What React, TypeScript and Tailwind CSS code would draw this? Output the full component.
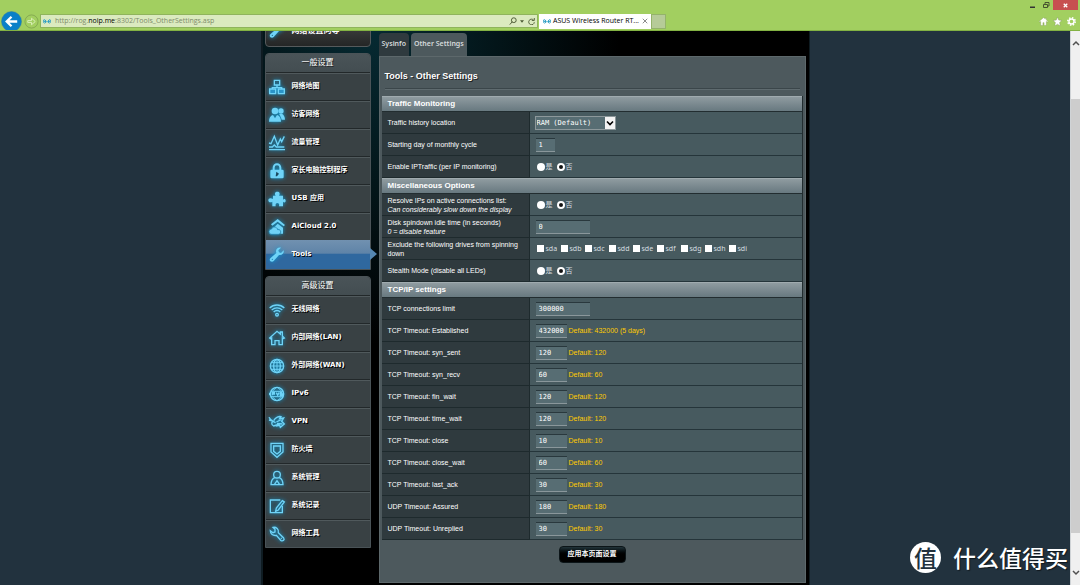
import type { ReactNode } from "react";

const icons: Record<string, ReactNode> = {
  map: (
    <g fill="none" stroke="currentColor" strokeWidth={2}>
      <path d="M8 2h8v7H8zM12 9v4M5 15v-2h14v2" />
      <path d="M1 15h9v7H1zM14 15h9v7h-9z" fill="#2a94c8" />
    </g>
  ),
  guest: (
    <g fill="currentColor">
      <circle cx="9" cy="6" r="5" />
      <circle cx="18" cy="6" r="4" />
      <path d="M0 22c0-5 2-9 6-10l3 5 3-5c4 1 6 5 6 10z" />
      <path d="M15 11l4-1c3 1 5 5 5 9h-5c-1-3-2-6-4-8z" />
    </g>
  ),
  traffic: (
    <g fill="none" stroke="currentColor" strokeWidth={2}>
      <path d="M0 12l3 1 5-11 5 13 4-9 2 4 4-8" />
      <path d="M0 18h5l3-3 3 3h12M0 22h24" />
    </g>
  ),
  lock: (
    <g>
      <path d="M7 11V7a5 5 0 0110 0v4" fill="none" stroke="currentColor" strokeWidth={3} />
      <rect x="2" y="10" width="20" height="13" rx="2" fill="currentColor" />
      <path d="M11 13l4 3-3 4h-2z" fill="#1b4a60" />
    </g>
  ),
  usb: (
    <path
      fill="currentColor"
      d="M6 7h4c-2-3-1-6 2.500-6s4.500 3 2.500 6h6v6c2-2 4-1 4 1.500s-2 3.500-4 1.500v7h-6c1-4-.5-5-2.500-5s-3 1-2.500 5H5v-7c-3 2-6 1-6-2s3-4 7-2z"
    />
  ),
  cloud: (
    <g fill="currentColor">
      <path d="M13 0l11 9-2 2-9-7-8 6-2-2z" />
      <path d="M13 7l8 6v9h-4c1-5-2-8-7-7l-3-2z" />
      <path d="M4 23a4 4 0 010-8c1-4 8-4 9 1 6-1 6 7 1 7z" stroke="#217ba6" />
    </g>
  ),
  wrench: (
    <path
      fill="currentColor"
      d="M22 5l-4 4-3-1-1-3 4-4c-5-1-9 3-7 8l-9 8c-3 3 2 7 5 4l8-9c5 1 8-3 7-7zM5 19.500a1 1 0 110-2 1 1 0 010 2z"
    />
  ),
  wifi: (
    <g fill="none" stroke="currentColor" strokeWidth={2}>
      <path d="M1 9c6-6 16-6 22 0M4 12c5-4 11-4 16 0M7 15c3-3 7-3 10 0" />
      <circle cx="12" cy="19" r="2" />
    </g>
  ),
  home: (
    <path
      fill="none"
      stroke="currentColor"
      strokeWidth={2}
      d="M1 12L12 2l5 4V3h3v6l3 3-2 1-1-1v10h-5v-6H9v6H4V12l-2 1z"
    />
  ),
  globe: (
    <g fill="none" stroke="currentColor" strokeWidth={2}>
      <circle cx="12" cy="12" r="10" />
      <ellipse cx="12" cy="12" rx="5" ry="10" />
      <path d="M12 2v20M2 12h20M4 7h16M4 17h16" strokeWidth={1.500} />
    </g>
  ),
  ipv6: (
    <g fill="none" stroke="currentColor" strokeWidth={2}>
      <circle cx="12" cy="12" r="10" />
      <path d="M12 2c-5 3-6 5-6 6M12 2c5 3 6 5 6 6M12 22c-5-3-6-5-6-6M12 22c5-3 6-5 6-6M3 8h18M3 16h18" strokeWidth={1.500} />
      <path d="M1 10v4M5 14v-4h3v2H5M11 10l2 4 2-4M20 10h-3v4h4v-2h-3" />
    </g>
  ),
  vpn: (
    <g fill="none" stroke="currentColor" strokeWidth={2}>
      <path d="M0 5c2 5 6 6 10 8M0 9l8 2c-5 0-5 5-1 7l9-3" />
      <path d="M7 10c3-5 8-7 11-6l-2 3 6-1-3 5 4 4-6 5-1-3-6 1M11 12l8-4M12 14l8 1" />
    </g>
  ),
  shield: (
    <g fill="none" stroke="currentColor" strokeWidth={2}>
      <path d="M3 2h18v13l-9 8-9-8z" />
      <path d="M7 6h10v8l-5 4-5-4z" />
    </g>
  ),
  admin: (
    <g fill="none" stroke="currentColor" strokeWidth={2}>
      <circle cx="12" cy="7" r="5" />
      <path d="M9 11c-4 2-6 5-6 11h18c0-6-2-9-6-11M8 22l4-6 4 6" />
    </g>
  ),
  log: (
    <g fill="none" stroke="currentColor" strokeWidth={2}>
      <path d="M17 3H2v19h18V12" />
      <path d="M20 4l3 2-9 12-4 2 1-5z" />
    </g>
  ),
  tools: (
    <path
      fill="none"
      stroke="currentColor"
      strokeWidth={2}
      d="M2 7l4 3 3-1V5L6 2c5-1 9 3 8 8l8 8c2 3-1 5-4 4l-7-8c-5 1-9-2-9-7zM18 18l1 1"
    />
  ),
};

const general = [
  { icon: "map", label: "网络地图" },
  { icon: "guest", label: "访客网络" },
  { icon: "traffic", label: "流量管理" },
  { icon: "lock", label: "家长电脑控制程序" },
  { icon: "usb", label: "USB 应用" },
  { icon: "cloud", label: "AiCloud 2.0" },
  { icon: "wrench", label: "Tools", active: true },
];

const advanced = [
  { icon: "wifi", label: "无线网络" },
  { icon: "home", label: "内部网络(LAN)" },
  { icon: "globe", label: "外部网络(WAN)" },
  { icon: "ipv6", label: "IPv6" },
  { icon: "vpn", label: "VPN" },
  { icon: "shield", label: "防火墙" },
  { icon: "admin", label: "系统管理" },
  { icon: "log", label: "系统记录" },
  { icon: "tools", label: "网络工具" },
];

const drives = ["sda", "sdb", "sdc", "sdd", "sde", "sdf", "sdg", "sdh", "sdi"];

const timeouts = [
  { label: "TCP Timeout: Established", value: "432000", hint: "432000 (5 days)" },
  { label: "TCP Timeout: syn_sent", value: "120", hint: "120" },
  { label: "TCP Timeout: syn_recv", value: "60", hint: "60" },
  { label: "TCP Timeout: fin_wait", value: "120", hint: "120" },
  { label: "TCP Timeout: time_wait", value: "120", hint: "120" },
  { label: "TCP Timeout: close", value: "10", hint: "10" },
  { label: "TCP Timeout: close_wait", value: "60", hint: "60" },
  { label: "TCP Timeout: last_ack", value: "30", hint: "30" },
  { label: "UDP Timeout: Assured", value: "180", hint: "180" },
  { label: "UDP Timeout: Unreplied", value: "30", hint: "30" },
];

function MenuIcon({ name }: { name: string }) {
  return (
    <svg
      viewBox="0 0 24 24"
      className="h-4 w-4 shrink-0 overflow-visible text-[#6fd3f7] drop-shadow-[0_0_2px_#0a9fdc]"
      aria-hidden
    >
      {icons[name]}
    </svg>
  );
}

type MenuItem = { icon: string; label: string; active?: boolean };

function Menu({ title, items }: { title: string; items: MenuItem[] }) {
  return (
    <nav aria-label={title} className="rounded-t border border-[#4a5357] bg-[#394144]">
      <h2 className="h-[18px] rounded-t bg-linear-to-b from-[#4a5458] to-[#434d51] text-center text-[8px] leading-[18px] text-shadow-[1px_1px_0_#222]">
        {title}
      </h2>
      <ul>
        {items.map((item) => (
          <li key={item.label} className="relative">
            <a
              href="#"
              aria-current={item.active ? "page" : undefined}
              className={`flex items-center gap-[7px] pl-[3px] text-[7px] font-bold text-shadow-[1px_1px_0_#000] ${
                item.active
                  ? "h-[29px] bg-linear-to-b from-[#7191b0] from-0% via-[#5f84a8] via-45% to-[#2f689f] to-50%"
                  : "h-7 border-t border-t-[#22282a] shadow-[inset_0_1px_0_#50595c]"
              }`}
            >
              <MenuIcon name={item.icon} />
              {item.label}
            </a>
            {item.active && (
              <svg viewBox="0 0 7 12" className="absolute top-2 left-full h-3 w-[7px]" aria-hidden>
                <path d="M0 0l7 6-7 6z" fill="#5587b2" />
              </svg>
            )}
          </li>
        ))}
      </ul>
    </nav>
  );
}

function SectionHead({ title }: { title: string }) {
  return (
    <thead>
      <tr>
        <th
          colSpan={2}
          className="h-4 border-t border-b border-t-[#a0abaf] border-b-[#222d30] bg-linear-to-b from-[#8f9ba0] to-[#687980] pl-[6px] text-left text-[8px] leading-[14px] font-bold"
        >
          {title}
        </th>
      </tr>
    </thead>
  );
}

function Row({ label, note, htmlFor, children }: { label: string; note?: string; htmlFor?: string; children: ReactNode }) {
  return (
    <tr className="h-[22px]">
      <th
        scope="row"
        className="border-r border-b border-[#1e2a2d] bg-[#2f3a3e] pl-[6px] text-left text-[7px] leading-[9px] font-normal"
      >
        <label htmlFor={htmlFor}>{label}</label>
        {note && <i className="block">{note}</i>}
      </th>
      <td className="border-b border-[#25353a] bg-[#475a5f] pl-[6px]">
        <div className="flex items-center">{children}</div>
      </td>
    </tr>
  );
}

function TextInput({ id, value, width }: { id: string; value: string; width: string }) {
  return (
    <input
      id={id}
      type="text"
      defaultValue={value}
      className={`h-[14px] border-t border-b border-t-[#29383d] border-b-[#8a979b] bg-[#576d73] pl-[3px] font-['DejaVu_Sans_Mono',monospace] text-[7px] leading-3 ${width}`}
    />
  );
}

function YesNo({ name }: { name: string }) {
  return (
    <div role="radiogroup" aria-label={name} className="ml-px flex gap-1 text-[7px] leading-[10px] text-[#d7dfe0]">
      {["是", "否"].map((t) => (
        <label key={t} className="flex items-center gap-px">
          <input
            type="radio"
            name={name}
            defaultChecked={t === "否"}
            className="h-2 w-2 appearance-none rounded-full bg-white checked:border-2 checked:border-white checked:bg-[#111]"
          />
          {t}
        </label>
      ))}
    </div>
  );
}

function SignalIcon() {
  return (
    <svg viewBox="0 0 20 16" className="h-[7px] w-2 shrink-0" fill="none" stroke="#2f9fc4" strokeWidth={2.500} aria-hidden>
      <path d="M4 2c-4 3-4 8 0 11M7 4c-2 2-2 5 0 7M16 2c4 3 4 8 0 11M13 4c2 2 2 5 0 7" />
      <circle cx="6" cy="8" r="2" fill="#2f9fc4" />
      <circle cx="14" cy="8" r="2" fill="#2f9fc4" />
    </svg>
  );
}

function BrowserBar() {
  return (
    <header className="flex h-[31px] shrink-0 flex-col overflow-hidden border-b border-[#83b243] bg-[#a2cf60] font-['Open_Sans','Noto_Sans',sans-serif] text-[7px]">
      <div className="flex h-[11px] shrink-0 items-start justify-end pr-[2px] text-[#333]">
        <button type="button" aria-label="Minimize" className="flex h-[10px] w-[14px] items-center justify-center">
          <svg viewBox="0 0 8 8" className="h-2 w-2"><path d="M2 5.500h5v1.500H2z" fill="#333" /></svg>
        </button>
        <button type="button" aria-label="Restore" className="flex h-[10px] w-[14px] items-center justify-center">
          <svg viewBox="0 0 8 8" className="h-2 w-2" fill="none" stroke="#46532f"><path d="M1.500 3.500h4v3h-4zM3 3V1.500h4v3.500H6" /></svg>
        </button>
        <button type="button" aria-label="Close" className="flex h-[10px] w-[25px] items-center justify-center bg-[#c75050]">
          <svg viewBox="0 0 8 8" className="h-[7px] w-[7px]" stroke="#fff" strokeWidth={1.500}><path d="M2 2l4 4M6 2L2 6" /></svg>
        </button>
      </div>
      <div className="flex h-5 items-center pr-1">
        <button type="button" aria-label="Back" className="flex h-5 w-[21px] shrink-0 items-center justify-center">
          <svg viewBox="0 0 22 22" className="ml-px h-[21px] w-[21px] shrink-0">
            <circle cx="11" cy="11" r="10.500" fill="#0a80c8" stroke="#3c7f96" strokeWidth={0.500} />
            <path d="M17 11H6M11 6l-5 5 5 5" fill="none" stroke="#fff" strokeWidth={2.500} />
          </svg>
        </button>
        <button type="button" aria-label="Forward" className="ml-[3px] h-[15px] w-[15px] shrink-0">
          <svg viewBox="0 0 16 16" className="h-full w-full" fill="none">
            <circle cx="8" cy="8" r="7" stroke="#84a951" />
            <path d="M4 7h4V4.500L12 8l-4 3.500V9H4z" stroke="#dcefbb" />
          </svg>
        </button>
        <div className="ml-px flex h-[14px] w-[498px] items-center gap-1 border border-[#8fb45c] bg-[#dbeabf] pr-[2px] pl-[2px]">
          <SignalIcon />
          <div className="flex-1 text-[#7e8a6b]">
            http://rog.<span className="text-black">noip.me</span>:8302/Tools_OtherSettings.asp
          </div>
          <button type="button" aria-label="Search" className="flex items-center gap-[3px]">
            <svg viewBox="0 0 10 10" className="h-2 w-2" fill="none" stroke="#4c5a35" strokeWidth={1.200}><circle cx="6" cy="4" r="3" /><path d="M4 6L1 9.500" /></svg>
            <svg viewBox="0 0 6 4" className="h-[3px] w-1"><path d="M0 0h6L3 4z" fill="#4c5a35" /></svg>
          </button>
          <button type="button" aria-label="Refresh">
            <svg viewBox="0 0 10 10" className="h-[7px] w-[7px]" fill="none" stroke="#4c5a35" strokeWidth={1.300}><path d="M8 3a4 4 0 101 3M9 0v3.500H5.500" /></svg>
          </button>
        </div>
        <div className="ml-px flex h-[15px] w-[112px] items-center gap-[2px] bg-white pr-[3px] pl-1 text-black">
          <SignalIcon />
          <span className="flex-1 whitespace-nowrap">ASUS Wireless Router RT...</span>
          <button type="button" aria-label="Close tab">
            <svg viewBox="0 0 8 8" className="h-[6px] w-[6px]" stroke="#666"><path d="M1 1l6 6M7 1L1 7" /></svg>
          </button>
        </div>
        <button type="button" aria-label="New tab" className="h-[15px] w-[15px] border border-[#94b36a] bg-[#b6cb98]" />
        <div className="ml-auto flex gap-[5px]">
          <button type="button" aria-label="Home">
            <svg viewBox="0 0 16 16" className="h-[9px] w-[9px]"><path d="M8 1L0 8l1.500 1L3 8v7h4v-5h2v5h4V8l1.500 1L16 8l-3-3V2h-2v1z" fill="#fff" stroke="#7d9554" strokeWidth={0.700} /></svg>
          </button>
          <button type="button" aria-label="Favorites">
            <svg viewBox="0 0 16 16" className="h-[9px] w-[9px]"><path d="M8 0l2.300 5.500 5.700.5-4.300 3.800L13 16l-5-3.300L3 16l1.300-6.200L0 6l5.700-.5z" fill="#fff" stroke="#7d9554" strokeWidth={0.700} /></svg>
          </button>
          <button type="button" aria-label="Tools">
            <svg viewBox="0 0 16 16" className="h-[9px] w-[9px]" fill="none" stroke="#fff"><circle cx="8" cy="8" r="4.500" strokeWidth={2.500} /><circle cx="8" cy="8" r="6.500" strokeWidth={3} strokeDasharray="2.550 2.550" /></svg>
          </button>
        </div>
      </div>
    </header>
  );
}

function ScrollBar() {
  return (
    <div className="flex w-[10px] shrink-0 flex-col items-center justify-between border-l border-[#cfd3d6] bg-[#f0f0f0] pt-2 pb-2">
      <svg viewBox="0 0 8 8" className="h-2 w-2" fill="none" stroke="#505050" strokeWidth={1.500}><path d="M1 6l3-3 3 3" /></svg>
      <div className="mt-[52px] mb-9 w-full flex-1 bg-[#cdcdcd]" />
      <svg viewBox="0 0 8 8" className="h-2 w-2" fill="none" stroke="#505050" strokeWidth={1.500}><path d="M1 2l3 3 3-3" /></svg>
    </div>
  );
}

export default function App() {
  return (
    <div className="relative flex h-screen flex-col overflow-hidden bg-[#22323e] font-['Liberation_Sans','Noto_Sans_CJK_SC',sans-serif] text-white">
      <BrowserBar />
      <div className="flex min-h-0 flex-1">
        <div className="flex min-w-0 flex-1 justify-center overflow-hidden">
          <div className="flex w-full max-w-[549px] items-start gap-2 border-r border-l-2 border-[#0f1c22] bg-black bg-radial-[at_20%_0%] from-[#062a32] to-black to-40% px-[3px] pl-[2px]">
            <aside className="w-[106px] shrink-0 font-['DejaVu_Sans','Noto_Sans_CJK_SC',sans-serif]">
              <a
                href="#"
                className="-mt-4 mb-[6px] flex h-8 items-center gap-[7px] rounded-b border border-[#555a5c] bg-linear-to-b from-[#4a4a4a] to-[#242626] pl-[3px] text-[8px] font-bold"
              >
                <MenuIcon name="wrench" />
                网络设置向导
              </a>
              <Menu title="一般设置" items={general} />
              <div className="h-[6px]" />
              <Menu title="高级设置" items={advanced} />
            </aside>

            <main className="min-w-0 flex-1 pt-[2px]">
              <div className="flex h-[23px] gap-[2px] font-['Noto_Sans',sans-serif] text-[7px] font-semibold text-[#d5dadb]">
                <a href="#" className="flex items-center rounded-t bg-[#2f3a3e] px-[3px]">
                  Sysinfo
                </a>
                <a href="#" aria-current="page" className="flex items-center rounded-t bg-[#4d595d] px-[3px]">
                  Other Settings
                </a>
              </div>
              <form
                className="h-[527px] border border-[#5d686b] bg-[#4d595d] pr-[2px] pl-[2px]"
                onSubmit={(e) => e.preventDefault()}
              >
                <h1 className="mx-[3px] mb-[7px] flex h-8 items-center border-b border-[#3b464a] pt-[6px] text-[9px] leading-3 font-bold text-shadow-[1px_1px_0_#222] shadow-[0_1px_0_#5f6b6f]">
                  Tools - Other Settings
                </h1>
                <table className="w-full table-fixed border-separate border-spacing-0 border-r border-[#222d30]">
                  <colgroup>
                    <col className="w-[148px]" />
                    <col />
                  </colgroup>
                  <SectionHead title="Traffic Monitoring" />
                  <tbody>
                    <Row label="Traffic history location" htmlFor="history">
                      <div className="relative -ml-px w-[81px]">
                        <select
                          id="history"
                          className="block h-[14px] w-full appearance-none border border-[#8d989b] bg-[#576d73] px-px font-['DejaVu_Sans_Mono',monospace] text-[7px] leading-3"
                        >
                          <option>RAM (Default)</option>
                        </select>
                        <svg viewBox="0 0 10 12" className="pointer-events-none absolute top-px right-px h-3 w-[10px] bg-[#f3f3f3]" aria-hidden>
                          <path d="M2 4.500l3 3 3-3" fill="none" stroke="#000" strokeWidth={1.600} />
                        </svg>
                      </div>
                    </Row>
                    <Row label="Starting day of monthly cycle" htmlFor="cycle">
                      <TextInput id="cycle" value="1" width="w-[19px]" />
                    </Row>
                    <Row label="Enable IPTraffic (per IP monitoring)">
                      <YesNo name="iptraffic" />
                    </Row>
                  </tbody>
                  <SectionHead title="Miscellaneous Options" />
                  <tbody>
                    <Row label="Resolve IPs on active connections list:" note="Can considerably slow down the display">
                      <YesNo name="resolve" />
                    </Row>
                    <Row label="Disk spindown idle time (in seconds)" note="0 = disable feature" htmlFor="spindown">
                      <TextInput id="spindown" value="0" width="w-[54px]" />
                    </Row>
                    <Row label="Exclude the following drives from spinning down">
                      <div className="ml-px flex gap-[3px] font-['Noto_Sans',sans-serif] text-[7px] leading-[10px] text-[#d7dfe0]">
                        {drives.map((d) => (
                          <label key={d} className="flex w-[21px] items-center gap-[2px]">
                            <input
                              type="checkbox"
                              name={d}
                              className="h-[7px] w-[7px] appearance-none bg-white checked:bg-[#29383d]"
                            />
                            {d}
                          </label>
                        ))}
                      </div>
                    </Row>
                    <Row label="Stealth Mode (disable all LEDs)">
                      <YesNo name="stealth" />
                    </Row>
                  </tbody>
                  <SectionHead title="TCP/IP settings" />
                  <tbody>
                    <Row label="TCP connections limit" htmlFor="limit">
                      <TextInput id="limit" value="300000" width="w-[54px]" />
                    </Row>
                    {timeouts.map((t) => (
                      <Row key={t.label} label={t.label} htmlFor={t.label}>
                        <TextInput id={t.label} value={t.value} width="w-[31px]" />
                        <span className="ml-[2px] text-[7px] leading-3 text-[#ffcc00]">Default: {t.hint}</span>
                      </Row>
                    ))}
                  </tbody>
                </table>
                <div className="flex justify-center pt-[6px]">
                  <button
                    type="submit"
                    className="h-[17px] rounded border border-[#0c1518] bg-linear-to-b from-[#22343a] to-black to-60% px-2 text-[7px] font-bold"
                  >
                    应用本页面设置
                  </button>
                </div>
              </form>
            </main>
          </div>
        </div>
        <ScrollBar />
      </div>

      {/* site mark over the page */}
      <div className="absolute right-3 bottom-3 flex items-center gap-3 font-['Noto_Sans_CJK_SC',sans-serif] leading-[31px] font-medium text-shadow-[1px_1px_1px_#0008]">
        <span className="flex h-[31px] w-[31px] items-center justify-center rounded-full bg-white text-[23px] text-[#22323e] text-shadow-none">
          值
        </span>
        <span className="text-[23px]">什么值得买</span>
      </div>
    </div>
  );
}
